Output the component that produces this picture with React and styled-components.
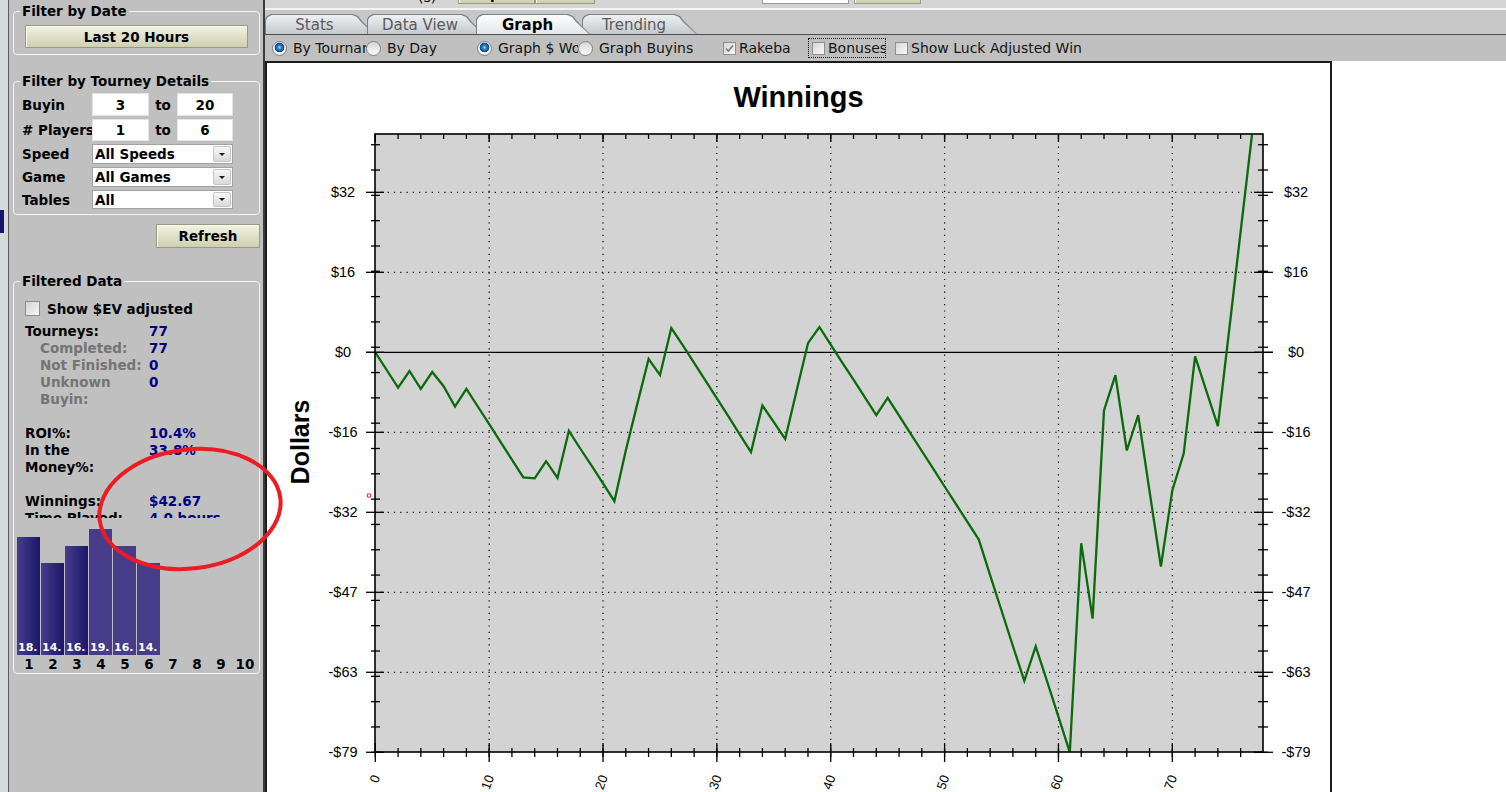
import React from "react";
import styled, { createGlobalStyle, css } from "styled-components";

const UI_FONT = `"DejaVu Sans", Verdana, sans-serif`;
const CHART_FONT = `"Liberation Sans", Arial, sans-serif`;

const GlobalStyle = createGlobalStyle`
  *, *::before, *::after { box-sizing: border-box; }
  html, body { margin: 0; padding: 0; background: #ffffff; }
  body { font-family: ${UI_FONT}; color: #000; }
`;

// cumulative winnings per tourney
const WINNINGS = [
  0, -3.5, -7, -3.7, -7.2, -3.9, -6.7, -10.7, -7.2, -10.7,
  -14.2, -17.7, -21.2, -24.7, -24.9, -21.5, -24.8, -15.5, -19, -22.4,
  -25.9, -29.4, -19.4, -10.3, -1.3, -4.5, 4.8, 1.4, -2.1, -5.6,
  -9.1, -12.6, -16.2, -19.7, -10.5, -13.8, -17.1, -7.6, 1.8, 5,
  1.5, -2, -5.4, -8.9, -12.4, -9, -12.5, -16, -19.5, -23,
  -26.5, -30, -33.5, -37, -44, -51, -58, -64.9, -58.1, -65,
  -72, -79, -37.7, -52.6, -11.5, -4.5, -19.4, -12.4, -27.4, -42.3,
  -27.3, -20, -0.8, -7.7, -14.6, 4.6, 23.8, 43,
];

const BARS = [
  { label: "18.", value: 18.2 },
  { label: "14.", value: 14.1 },
  { label: "16.", value: 16.8 },
  { label: "19.", value: 19.4, flat: true },
  { label: "16.", value: 16.8, flat: true },
  { label: "14.", value: 14.1, flat: true },
];

// chart scale (page coordinates)
const PLOT = { l: 375, r: 1263, t: 134, b: 752 };
const px = (u) => 375.3 + u * 11.386;
const py = (v) => 352.3 - v * 5.063;
const Y_MAJOR = [
  [31.6, "$32"], [15.8, "$16"], [0, "$0"], [-15.8, "-$16"],
  [-31.6, "-$32"], [-47.4, "-$47"], [-63.2, "-$63"], [-79, "-$79"],
];
const Y_MINOR = Array.from({ length: 25 }, (_, i) => -79 + i * 5);
const X_MINOR = Array.from({ length: 39 }, (_, i) => i * 2);
const X_MAJOR = [0, 10, 20, 30, 40, 50, 60, 70];

const Screen = styled.div`
  position: relative;
  display: flex;
  width: 1506px;
  height: 792px;
  overflow: hidden;
  background: #fff;
`;

/* ---------- left side ---------- */

const Gutter = styled.div`
  flex: none;
  width: 9px;
  padding-top: 210px;
  background: #d6dadb;
  border-right: 1px solid #5c5c5c;
`;

const GutterMark = styled.div`
  width: 4px;
  height: 23px;
  background: #15156c;
`;

const Side = styled.aside`
  flex: none;
  width: 256px;
  padding: 3px 3px 0 4px;
  background: #c0c0c0;
  border-right: 2px solid #3c3c3c;
  font: bold 13.5px ${UI_FONT};
`;

const Group = styled.fieldset`
  min-width: 0;
  margin: ${(p) => p.$mt || 0}px 0 0;
  padding: ${(p) => p.$pt}px 0 ${(p) => p.$pb}px 3px;
  border: 1px solid #f4f4f4;
  border-radius: 4px;
`;

const Legend = styled.legend`
  margin-left: 3px;
  padding: 0 2px;
  line-height: 16px;
`;

const BeigeButton = styled.div`
  display: flex;
  align-items: center;
  justify-content: center;
  width: ${(p) => p.$w}px;
  height: ${(p) => p.$h}px;
  margin-left: ${(p) => p.$ml || 0}px;
  border: 1px solid #9a9a7e;
  background: linear-gradient(#f3f3e6, #e2e2cc 45%, #cfcfb0);
  box-shadow: inset 1px 1px 0 #fbfbf4;
  font: bold 13.5px ${UI_FONT};
`;

const RefreshButton = styled(BeigeButton)`
  margin: 9px 0 0 auto;
`;

const FilterGrid = styled.div`
  display: grid;
  grid-template-columns: 70px 57px 28px 56px;
  grid-template-rows: 23px 22px 20px 20px 19px;
  row-gap: 3px;
  padding-left: 5px;
  align-items: center;
`;

const FieldLabel = styled.div`
  white-space: nowrap;
`;

const NumBox = styled.div`
  display: flex;
  align-items: center;
  justify-content: center;
  height: 100%;
  background: #fff;
  border: 1px solid #e4e4e4;
`;

const ToWord = styled.div`
  text-align: center;
`;

const Select = styled.div`
  grid-column: 2 / span 3;
  display: flex;
  align-items: center;
  justify-content: space-between;
  height: 100%;
  padding: 1px 1px 1px 2px;
  background: #fff;
  border: 1px solid #a2a2a2;
`;

const SelectArrow = styled.span`
  display: flex;
  align-items: center;
  justify-content: center;
  width: 18px;
  height: 100%;
  border: 1px solid #c4c4c4;
  border-radius: 2px;
  background: linear-gradient(#f7f7f7, #d9d9d9);
  &::after {
    content: "";
    border-left: 3px solid transparent;
    border-right: 3px solid transparent;
    border-top: 3px solid #1a1a1a;
  }
`;

const CheckRow = styled.div`
  display: flex;
  align-items: center;
  height: 17px;
  padding-left: 8px;
`;

const SideCheck = styled.span`
  width: 15px;
  height: 15px;
  margin-right: 7px;
  border: 1px solid #8c8c8c;
  background: linear-gradient(135deg, #d4d4d4, #f6f6f6);
`;

const Stats = styled.div`
  display: grid;
  grid-template-columns: 124px 1fr;
  align-items: start;
  height: 195px;
  margin-top: 6px;
  padding-left: 8px;
  overflow: hidden;
  line-height: 17px;
`;

const StatLabel = styled.div`
  padding-left: ${(p) => (p.$sub ? 15 : 0)}px;
  margin-top: ${(p) => (p.$gap ? 17 : 0)}px;
  color: ${(p) => (p.$sub ? "#747474" : "#000")};
  white-space: nowrap;
`;

const StatValue = styled.div`
  margin-top: ${(p) => (p.$gap ? 17 : 0)}px;
  color: #00007c;
  white-space: nowrap;
`;

const BarChart = styled.div`
  display: grid;
  grid-template-columns: repeat(10, 24px);
  grid-template-rows: 137px 18px;
`;

const BarSlot = styled.div`
  display: flex;
  align-items: flex-end;
`;

const Bar = styled.div`
  display: flex;
  align-items: flex-end;
  width: 23px;
  padding: 0 0 1px 1px;
  background: ${(p) =>
    p.$flat ? "#473c8a" : "linear-gradient(90deg, #463d8e, #1b1768)"};
  color: #fff;
  font-size: 11px;
  line-height: 12px;
  overflow: hidden;
`;

const BarNumber = styled.div`
  text-align: center;
  line-height: 18px;
`;

const Annotation = styled.svg`
  position: absolute;
  left: 0;
  top: 0;
  pointer-events: none;
`;

/* ---------- main area ---------- */

const Main = styled.main`
  flex: 1;
  display: flex;
  flex-direction: column;
  min-width: 0;
  background: #fff;
`;

const HeaderStrip = styled.div`
  flex: none;
  display: flex;
  align-items: flex-end;
  height: 10px;
  padding-bottom: 4px;
  overflow: hidden;
  background: #d4d4d4;
  border-bottom: 2px solid #f3f3f3;
`;

const HeaderText = styled.span`
  margin-left: 153px;
  font: 14px ${UI_FONT};
  line-height: 14px;
  width: 25px;
`;

const HeaderInput = styled.span`
  width: 87px;
  height: 20px;
  margin-left: 167px;
  background: #fff;
  border: 1px solid #9a9a9a;
`;

const TabRow = styled.div`
  flex: none;
  display: flex;
  align-items: flex-end;
  height: 25px;
  padding-top: 4px;
  background: #c7c7c7;
  border-bottom: 1px solid #4e4e4e;
`;

const tabShape = css`
  clip-path: polygon(
    0 100%, 0 5px, 2px 2px, 6px 0,
    calc(100% - 22px) 0, calc(100% - 17px) 2px, calc(100% - 13px) 7px,
    100% 100%
  );
`;

const Tab = styled.div`
  position: relative;
  z-index: ${(p) => (p.$active ? 2 : 1)};
  flex: none;
  width: ${(p) => p.$w}px;
  height: 20px;
  margin-right: -8px;
  background: #7b838a;
  ${tabShape}
`;

const TabFace = styled.div`
  position: absolute;
  inset: 1px 1px 0 1px;
  display: flex;
  align-items: center;
  justify-content: center;
  padding-right: 11px;
  background: ${(p) =>
    p.$active
      ? "linear-gradient(#fdfdfd, #e3e6e9)"
      : "linear-gradient(#eef1f3, #c4c9ce)"};
  color: ${(p) => (p.$active ? "#000" : "#5a5a5a")};
  font: ${(p) => (p.$active ? "bold" : "normal")} 15px ${UI_FONT};
  ${tabShape}
`;

const OptionBar = styled.div`
  flex: none;
  display: flex;
  align-items: center;
  height: 26px;
  padding-left: 7px;
  background: #c0c0c0;
  font: 14px ${UI_FONT};
  color: #141414;
`;

const Option = styled.div`
  flex: none;
  display: flex;
  align-items: center;
  width: ${(p) => (p.$w ? `${p.$w}px` : "auto")};
  height: 20px;
  margin-left: ${(p) => p.$ml || 0}px;
  padding-left: ${(p) => (p.$focus ? 3 : 0)}px;
  border: ${(p) => (p.$focus ? "1px dotted #111" : "none")};
  overflow: hidden;
  white-space: nowrap;
`;

const Radio = styled.span`
  flex: none;
  width: 15px;
  height: 15px;
  margin-right: 6px;
  border-radius: 50%;
  border: 1px solid #828282;
  background: ${(p) =>
    p.$on
      ? "radial-gradient(circle at 50% 42%, #9fd8ff 0, #2f7fc6 2px, #0d4a86 4.5px, #ffffff 5.2px, #e6e6e6 7px)"
      : "linear-gradient(#d6d6d6, #fbfbfb)"};
`;

const Check = styled.span`
  flex: none;
  display: flex;
  align-items: center;
  justify-content: center;
  width: 13px;
  height: 13px;
  margin-right: 3px;
  border: 1px solid #8e8e8e;
  background: linear-gradient(135deg, #d6d6d6, #fafafa);
`;

const GraphRow = styled.div`
  flex: 1;
  display: flex;
  min-height: 0;
`;

const GraphPanel = styled.section`
  flex: none;
  width: 1067px;
  background: #fff;
  border: 2px solid #1c1c1c;
  border-bottom: none;
`;

const ChartSvg = styled.svg`
  display: block;
  font-family: ${CHART_FONT};
`;

function WinningsChart() {
  const points = WINNINGS.map((v, i) => `${px(i).toFixed(1)},${py(v).toFixed(1)}`).join(" ");
  const dots = { stroke: "#000", strokeWidth: 1.2, strokeDasharray: "1.2 5.1" };
  return (
    <ChartSvg width="1063" height="729" viewBox="267 63 1063 729">
      <defs>
        <clipPath id="plotArea">
          <rect x={PLOT.l} y={PLOT.t} width={PLOT.r - PLOT.l} height={PLOT.b - PLOT.t} />
        </clipPath>
      </defs>

      <text x="798.5" y="107" textAnchor="middle" fontSize="29" fontWeight="bold">
        Winnings
      </text>
      <text transform="translate(309 442) rotate(-90)" textAnchor="middle" fontSize="25" fontWeight="bold">
        Dollars
      </text>

      <rect x={PLOT.l} y={PLOT.t} width={PLOT.r - PLOT.l} height={PLOT.b - PLOT.t} fill="#d3d3d3" />

      {X_MAJOR.filter((u) => u > 0).map((u) => (
        <line key={`gx${u}`} x1={px(u)} x2={px(u)} y1={PLOT.t} y2={PLOT.b} {...dots} />
      ))}
      {Y_MAJOR.filter(([v]) => v !== 0 && v !== -79).map(([v]) => (
        <line key={`gy${v}`} x1={PLOT.l} x2={PLOT.r} y1={py(v)} y2={py(v)} {...dots} />
      ))}
      <line x1="366" x2="1273" y1={py(0)} y2={py(0)} stroke="#000" strokeWidth="1.3" />

      <polyline
        points={points}
        clipPath="url(#plotArea)"
        fill="none"
        stroke="#0b6a0b"
        strokeWidth="2.3"
        strokeLinejoin="miter"
      />

      <rect
        x={PLOT.l}
        y={PLOT.t}
        width={PLOT.r - PLOT.l}
        height={PLOT.b - PLOT.t}
        fill="none"
        stroke="#000"
        strokeWidth="1.6"
      />

      {Y_MINOR.map((v) => (
        <g key={`my${v}`} stroke="#000" strokeWidth="1.3">
          <line x1="371" x2="380" y1={py(v)} y2={py(v)} />
          <line x1="1258" x2="1268" y1={py(v)} y2={py(v)} />
        </g>
      ))}
      {Y_MAJOR.map(([v, label]) => (
        <g key={`My${v}`}>
          <line x1="366" x2="384" y1={py(v)} y2={py(v)} stroke="#000" strokeWidth="1.3" />
          <line x1="1254" x2="1273" y1={py(v)} y2={py(v)} stroke="#000" strokeWidth="1.3" />
          <text x="343" y={py(v) + 4.5} textAnchor="middle" fontSize="14.5">
            {label}
          </text>
          <text x="1296" y={py(v) + 4.5} textAnchor="middle" fontSize="14.5">
            {label}
          </text>
        </g>
      ))}

      {X_MINOR.map((u) => (
        <g key={`mx${u}`} stroke="#000" strokeWidth="1.3">
          <line x1={px(u)} x2={px(u)} y1={PLOT.t} y2={PLOT.t + 5} />
          <line x1={px(u)} x2={px(u)} y1="748" y2="757" />
        </g>
      ))}
      {X_MAJOR.map((u) => (
        <g key={`Mx${u}`}>
          <line x1={px(u)} x2={px(u)} y1={PLOT.t} y2={PLOT.t + 8} stroke="#000" strokeWidth="1.3" />
          <line x1={px(u)} x2={px(u)} y1="743" y2="762" stroke="#000" strokeWidth="1.3" />
          <text transform={`translate(${px(u) + 5} 777) rotate(-70)`} textAnchor="end" fontSize="13">
            {u}
          </text>
        </g>
      ))}

      <circle cx="369" cy="495.5" r="1.8" fill="none" stroke="#e0202a" strokeWidth="1.1" />
    </ChartSvg>
  );
}

function CheckTick() {
  return (
    <svg width="9" height="9" viewBox="0 0 9 9">
      <path d="M1 4.6 L3.4 7 L8 1.6" fill="none" stroke="#7a7a7a" strokeWidth="1.6" />
    </svg>
  );
}

const TABS = [
  { name: "Stats", w: 110 },
  { name: "Data View", w: 117 },
  { name: "Graph", w: 114, active: true },
  { name: "Trending", w: 115 },
];

export default function App() {
  return (
    <>
      <GlobalStyle />
      <Screen>
        <Gutter>
          <GutterMark />
        </Gutter>

        <Side>
          <Group $pt={6} $pb={6}>
            <Legend>Filter by Date</Legend>
            <BeigeButton $w={223} $h={23} $ml={8}>
              Last 20 Hours
            </BeigeButton>
          </Group>

          <Group $mt={18} $pt={4} $pb={5}>
            <Legend>Filter by Tourney Details</Legend>
            <FilterGrid>
              <FieldLabel>Buyin</FieldLabel>
              <NumBox>3</NumBox>
              <ToWord>to</ToWord>
              <NumBox>20</NumBox>

              <FieldLabel># Players</FieldLabel>
              <NumBox>1</NumBox>
              <ToWord>to</ToWord>
              <NumBox>6</NumBox>

              <FieldLabel>Speed</FieldLabel>
              <Select>
                All Speeds
                <SelectArrow />
              </Select>

              <FieldLabel>Game</FieldLabel>
              <Select>
                All Games
                <SelectArrow />
              </Select>

              <FieldLabel>Tables</FieldLabel>
              <Select>
                All
                <SelectArrow />
              </Select>
            </FilterGrid>
          </Group>

          <RefreshButton $w={104} $h={24}>
            Refresh
          </RefreshButton>

          <Group $mt={25} $pt={11} $pb={0}>
            <Legend>Filtered Data</Legend>
            <CheckRow>
              <SideCheck />
              Show $EV adjusted
            </CheckRow>

            <Stats>
              <StatLabel>Tourneys:</StatLabel>
              <StatValue>77</StatValue>
              <StatLabel $sub>Completed:</StatLabel>
              <StatValue>77</StatValue>
              <StatLabel $sub>Not Finished:</StatLabel>
              <StatValue>0</StatValue>
              <StatLabel $sub>
                Unknown
                <br />
                Buyin:
              </StatLabel>
              <StatValue>0</StatValue>

              <StatLabel $gap>ROI%:</StatLabel>
              <StatValue $gap>10.4%</StatValue>
              <StatLabel>
                In the
                <br />
                Money%:
              </StatLabel>
              <StatValue>33.8%</StatValue>

              <StatLabel $gap>Winnings:</StatLabel>
              <StatValue $gap>$42.67</StatValue>
              <StatLabel>Time Played:</StatLabel>
              <StatValue>4.0 hours</StatValue>
            </Stats>

            <BarChart>
              {Array.from({ length: 10 }, (_, i) => (
                <BarSlot key={`b${i}`}>
                  {BARS[i] && (
                    <Bar $flat={BARS[i].flat} style={{ height: `${BARS[i].value * 6.5}px` }}>
                      {BARS[i].label}
                    </Bar>
                  )}
                </BarSlot>
              ))}
              {Array.from({ length: 10 }, (_, i) => (
                <BarNumber key={`n${i}`}>{i + 1}</BarNumber>
              ))}
            </BarChart>
          </Group>
        </Side>

        <Main>
          <HeaderStrip>
            <HeaderText>(s)</HeaderText>
            <BeigeButton $w={77} $h={20} $ml={15}>
              Import
            </BeigeButton>
            <BeigeButton $w={60} $h={20} />
            <HeaderInput />
            <BeigeButton $w={67} $h={20} $ml={5} />
          </HeaderStrip>

          <TabRow>
            {TABS.map((t) => (
              <Tab key={t.name} $w={t.w} $active={t.active}>
                <TabFace $active={t.active}>{t.name}</TabFace>
              </Tab>
            ))}
          </TabRow>

          <OptionBar>
            <Option $w={94}>
              <Radio $on />
              By Tournament
            </Option>
            <Option $w={111}>
              <Radio />
              By Day
            </Option>
            <Option $w={101}>
              <Radio $on />
              Graph $ Won
            </Option>
            <Option $w={145}>
              <Radio />
              Graph Buyins
            </Option>
            <Option $w={68}>
              <Check>
                <CheckTick />
              </Check>
              Rakeback
            </Option>
            <Option $w={78} $ml={17} $focus>
              <Check />
              Bonuses
            </Option>
            <Option $ml={9}>
              <Check />
              Show Luck Adjusted Win
            </Option>
          </OptionBar>

          <GraphRow>
            <GraphPanel>
              <WinningsChart />
            </GraphPanel>
          </GraphRow>
        </Main>

        <Annotation width="300" height="600" viewBox="0 0 300 600">
          <ellipse
            cx="190"
            cy="509"
            rx="91"
            ry="59.5"
            transform="rotate(-7 190 509)"
            fill="none"
            stroke="#ec1c24"
            strokeWidth="4"
          />
        </Annotation>
      </Screen>
    </>
  );
}
